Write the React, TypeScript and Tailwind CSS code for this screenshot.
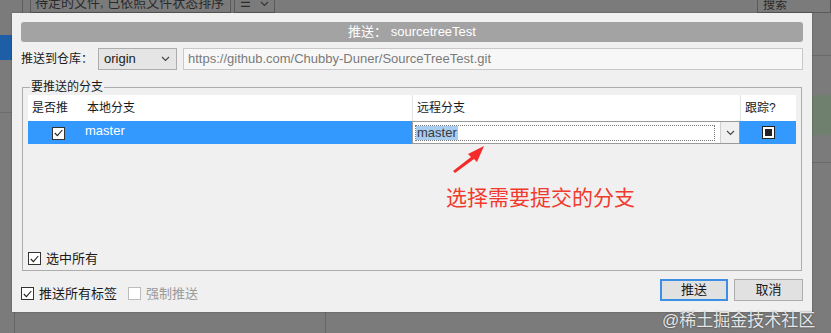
import React from "react";

const font = { fontFamily: '"Liberation Sans", "Noto Sans CJK SC", sans-serif' };

function Check({ checked, disabled }: { checked?: boolean; disabled?: boolean }) {
  return (
    <span
      className={
        "flex h-[13px] w-[13px] shrink-0 items-center justify-center border bg-white " +
        (disabled ? "border-[#bcbcbc] bg-[#f4f4f4]" : "border-[#333]")
      }
    >
      {checked && (
        <svg width="9" height="8" viewBox="0 0 9 8">
          <path d="M0.8 4 L3.4 6.6 L8.3 1" fill="none" stroke="#222" strokeWidth="1.1" />
        </svg>
      )}
    </span>
  );
}

function Chevron({ color = "#444" }: { color?: string }) {
  return (
    <svg width="9" height="6" viewBox="0 0 9 6">
      <path d="M1 1 L4.5 4.5 L8 1" fill="none" stroke={color} strokeWidth="1.1" />
    </svg>
  );
}

export default function App() {
  return (
    <div
      className="relative h-[333px] w-[831px] overflow-hidden bg-[#7b7b7b] text-[12px] text-[#1a1a1a]"
      style={font}
    >
      {/* background app behind the dialog */}
      <div className="flex h-[13px] items-end gap-[3px] pl-[22px] whitespace-nowrap">
        <div className="h-[13px] w-[5px] border-l border-[#5e5e5e]" />
        <div className="-mt-[6px] flex h-[19px] w-[201px] items-center justify-between overflow-hidden border border-[#5a5a5a] px-[4px] text-[13px] text-[#2a2a2a]">
          <span className="-mt-[2px]">待定的文件, 已依照文件状态排序</span>
          <Chevron color="#333" />
        </div>
        <div className="-mt-[6px] flex h-[19px] w-[41px] items-center justify-between border border-[#5a5a5a] px-[5px] text-[#2a2a2a]">
          <span className="-mt-[2px]">☰</span>
          <Chevron color="#333" />
        </div>
        <div className="ml-auto -mt-[6px] h-[19px] w-[74px] border border-[#5a5a5a] pl-[5px] pt-[1px] text-[#2a2a2a]">
          搜索
        </div>
      </div>
      <div className="absolute left-0 top-[35px] h-[25px] w-[12px] bg-[#1d5ea6]" />
      <div className="absolute left-0 top-[112px] h-px w-[12px] bg-[#6e6e6e]" />
      <div className="absolute right-0 top-[55px] h-px w-[19px] bg-[#6a6a6a]" />
      <div className="absolute right-0 top-[95px] h-[40px] w-[19px] bg-[#6f806f]" />
      <div className="absolute right-0 top-[162px] h-px w-[19px] bg-[#6a6a6a]" />
      <div className="absolute left-[14px] top-[312px] h-[21px] w-px bg-[#666]" />
      <div className="absolute left-[325px] top-[312px] h-[21px] w-px bg-[#666]" />

      {/* dialog */}
      <div className="absolute left-[12px] top-[13px] flex h-[299px] w-[800px] flex-col bg-[#f0f0f0] px-[9px] pt-[9px] shadow-[0_0_2px_rgba(0,0,0,0.3)]">
        <div className="flex h-[20px] items-center justify-center rounded-[3px] bg-[#a3a3a3] text-[13px] text-white">
          推送： sourcetreeTest
        </div>

        <div className="mt-[6px] flex h-[22px] items-center">
          <span className="w-[77px]">推送到仓库：</span>
          <div className="flex h-[22px] w-[79px] items-center justify-between border border-[#adadad] bg-[#e5e5e5] pl-[5px] pr-[6px] text-[13px]">
            <span>origin</span>
            <Chevron />
          </div>
          <div className="ml-[6px] flex h-[22px] flex-1 items-center border border-[#c8c8c8] bg-[#f7f7f7] pl-[4px] text-[13px] text-[#7a7a7a]">
            https://github.com/Chubby-Duner/SourceTreeTest.git
          </div>
        </div>

        <fieldset className="mx-[1px] mt-[10px] h-[191px] border border-[#adadad] px-[5px] pb-[6px]">
          <legend className="ml-[2px] px-[1px] leading-[14px]">要推送的分支</legend>
          <div className="mt-[1px] flex h-[26px] items-center bg-white">
            <span className="w-[56px] pl-[4px]">是否推</span>
            <span className="h-full w-[328px] pl-[3px] leading-[26px]">本地分支</span>
            <span className="h-full w-[328px] border-l border-[#e3e3e3] pl-[4px] leading-[26px]">远程分支</span>
            <span className="h-full flex-1 border-l border-[#e3e3e3] pl-[4px] leading-[26px]">跟踪?</span>
          </div>
          <div className="flex h-[23px] items-center bg-[#3399ff]">
            <div className="flex w-[56px] justify-center pl-[4px] pt-[1px]">
              <Check checked />
            </div>
            <span className="-mt-[4px] w-[328px] pl-[1px] text-[13px] text-white">master</span>
            <div className="flex h-full w-[328px] items-center border border-[#9a9a9a] bg-white">
              <div className="ml-[2px] flex h-[16px] flex-1 items-center border border-dotted border-[#777]">
                <span className="bg-[#a8cdf0] px-[1px] text-[13px] leading-[14px] text-[#3a3a3a]">master</span>
              </div>
              <div className="ml-[5px] flex h-full w-[19px] items-center justify-center border-l border-[#d0d0d0] bg-[#f0f0f0]">
                <Chevron />
              </div>
            </div>
            <div className="flex flex-1 justify-center">
              <span className="flex h-[13px] w-[13px] items-center justify-center border border-[#222] bg-white">
                <span className="h-[7px] w-[7px] bg-[#222]" />
              </span>
            </div>
          </div>
          <label className="mt-[105px] flex items-center gap-[5px] text-[13px]">
            <Check checked />
            <span>选中所有</span>
          </label>
        </fieldset>

        <div className="mt-[8px] flex items-start">
          <label className="mt-[5px] flex items-center gap-[5px] text-[13px]">
            <Check checked />
            <span>推送所有标签</span>
          </label>
          <label className="ml-[11px] mt-[5px] flex items-center gap-[5px] text-[13px] text-[#9a9a9a]">
            <Check disabled />
            <span>强制推送</span>
          </label>
          <button className="ml-auto flex h-[22px] w-[68px] items-center justify-center border-2 border-[#3c8fe3] bg-[#e1e1e1] text-[13px]">
            推送
          </button>
          <button className="ml-[6px] flex h-[22px] w-[69px] items-center justify-center border border-[#adadad] bg-[#e1e1e1] text-[13px]">
            取消
          </button>
        </div>
      </div>

      {/* annotation */}
      <svg className="absolute left-[450px] top-[143px]" width="40" height="32" viewBox="0 0 40 32">
        <polygon points="3,28 21,14 18,11 34,3 27,19 24,16 5,30" fill="#f52b2b" />
      </svg>
      <div className="absolute left-[446px] top-[185px] text-[21px] leading-[26px] text-[#f03a2e]">
        选择需要提交的分支
      </div>
      <div className="absolute left-[662px] top-[311px] text-[17px] leading-[20px] text-white/85 [text-shadow:0_0_2px_rgba(0,0,0,0.5)]">
        @稀土掘金技术社区
      </div>
    </div>
  );
}
